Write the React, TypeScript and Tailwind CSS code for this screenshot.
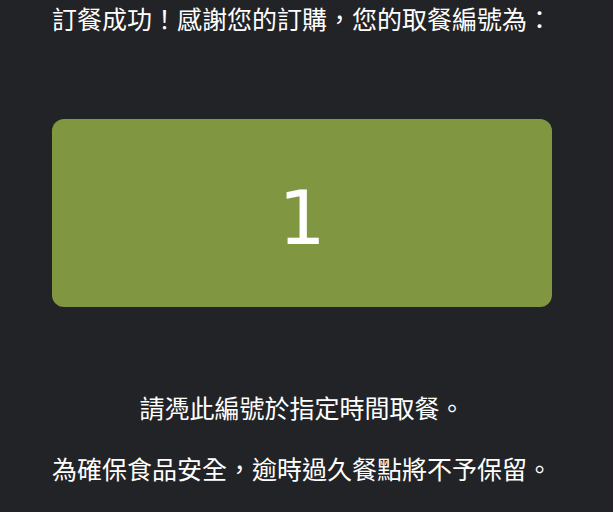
import React from "react";

const App: React.FC = () => {
    return (
        <div className="min-h-[512px] w-full bg-[#222326] text-white font-['Liberation_Serif','Noto_Sans_CJK_TC',serif]">
            <div className="flex w-[500px] flex-col items-center ml-[52px]">
                <p className="mt-[7px] text-[25px] leading-[28px] whitespace-nowrap">
                    訂餐成功！感謝您的訂購，您的取餐編號為：
                </p>
                <div className="mt-[84px] flex h-[188px] w-full items-center justify-center rounded-[12px] bg-[#809640] pt-[10px]">
                    <span className="font-['DejaVu_Sans',sans-serif] text-[74px] leading-none">
                        1
                    </span>
                </div>
                <p className="mt-[89px] text-[25px] leading-[28px] whitespace-nowrap">
                    請凴此編號於指定時間取餐。
                </p>
                <p className="mt-[33px] text-[25px] leading-[28px] whitespace-nowrap">
                    為確保食品安全，逾時過久餐點將不予保留。
                </p>
            </div>
        </div>
    );
};

export default App;
